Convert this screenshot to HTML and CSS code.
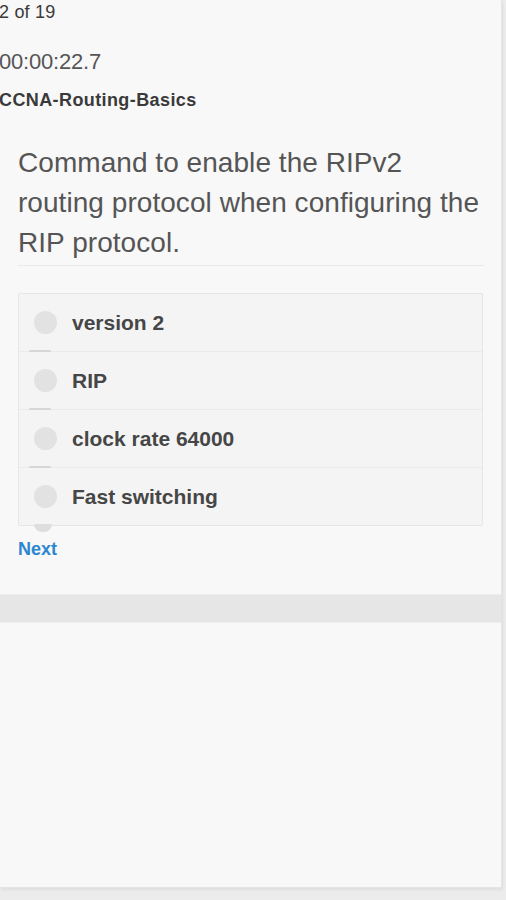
FILE: index.html
```
<!DOCTYPE html>
<html>
<head>
<meta charset="utf-8">
<link rel="stylesheet" href="styles.css">
</head>
<body>
<div class="panel">
  <div class="count">2 of 19</div>
  <div class="timer">00:00:22.7</div>
  <div class="course">CCNA-Routing-Basics</div>
  <div class="question">Command to enable the RIPv2 routing protocol when configuring the RIP protocol.</div>
  <div class="options">
    <div class="option"><span class="radio"></span><span class="label">version 2</span></div>
    <div class="option"><span class="radio"></span><span class="label">RIP</span></div>
    <div class="option"><span class="radio"></span><span class="label">clock rate 64000</span></div>
    <div class="option last"><span class="radio"></span><span class="label">Fast switching</span></div>
  </div>
  <div class="next">Next</div>
  <div class="band"></div>
</div>
</body>
</html>
```
FILE: styles.css
```
html, body {
  margin: 0;
  padding: 0;
}
body {
  background: #ececec;
  font-family: "Liberation Sans", Arial, sans-serif;
  color: #444;
  width: 506px;
  height: 900px;
  overflow: hidden;
}
.panel {
  width: 501px;
  height: 887px;
  background: #f8f8f8;
  border-right: 1px solid #e4e4e4;
  border-bottom: 1px solid #e4e4e4;
  box-shadow: 1px 2px 3px rgba(0,0,0,0.06);
  display: flex;
  flex-direction: column;
}
.count {
  font-size: 18px;
  line-height: 20px;
  margin-top: 2px;
  margin-left: -1px;
  color: #3a3a3a;
  letter-spacing: 0.2px;
}
.timer {
  font-size: 22px;
  line-height: 26px;
  margin-top: 27px;
  margin-left: -1px;
  color: #555;
  letter-spacing: -0.2px;
}
.course {
  font-size: 18px;
  line-height: 20px;
  font-weight: bold;
  margin-top: 15px;
  margin-left: -1px;
  color: #3a3a3a;
  letter-spacing: 0.4px;
}
.question {
  margin: 33px 17px 0 18px;
  font-size: 28px;
  line-height: 40px;
  color: #555;
  padding-bottom: 2px;
  border-bottom: 1px solid #e9e9e9;
  letter-spacing: 0.05px;
}
.options {
  margin: 27px 18px 0 18px;
  background: #f4f4f4;
  border: 1px solid #e6e6e6;
  border-radius: 2px;
  position: relative;
}
.option {
  height: 57px;
  border-bottom: 1px solid #ebebeb;
  display: flex;
  align-items: center;
  position: relative;
}
.option.last {
  border-bottom: none;
}
.radio {
  width: 23px;
  height: 23px;
  border-radius: 50%;
  background: #e2e2e2;
  margin-left: 15px;
  flex: none;
}
.option::after {
  content: "";
  position: absolute;
  left: 10px;
  bottom: -1px;
  width: 22px;
  height: 2px;
  background: #d6d6d6;
  border-radius: 1px;
}
.option.last::after {
  left: 15px;
  bottom: -7px;
  width: 18px;
  height: 8px;
  background: #dedede;
  border-radius: 0 0 9px 9px;
}
.label {
  margin-left: 15px;
  font-size: 21px;
  font-weight: bold;
  color: #464646;
}
.next {
  margin: 13px 0 0 18px;
  font-size: 18px;
  line-height: 20px;
  font-weight: bold;
  color: #2c86d0;
}
.band {
  margin-top: 35px;
  height: 27px;
  background: #e6e6e6;
  border-top: 1px solid #eeeeee;
  border-bottom: 1px solid #efefef;
}
```
